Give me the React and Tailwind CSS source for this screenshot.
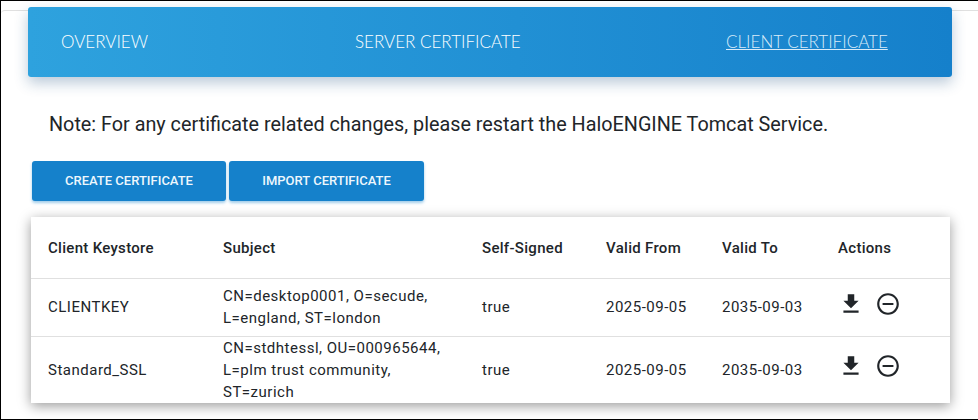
const DownloadIcon = () => (
  <svg width="26" height="26" viewBox="0 0 24 24" fill="currentColor">
    <path d="M19 9h-4V3H9v6H5l7 7 7-7zM5 18v2h14v-2H5z" />
  </svg>
)

const RemoveIcon = () => (
  <svg width="26" height="26" viewBox="0 0 24 24" fill="currentColor">
    <path d="M7 11v2h10v-2H7zm5-9C6.48 2 2 6.48 2 12s4.48 10 10 10 10-4.48 10-10S17.52 2 12 2zm0 18c-4.41 0-8-3.59-8-8s3.59-8 8-8 8 3.59 8 8-3.59 8-8 8z" />
  </svg>
)

const rows = [
  { name: 'CLIENTKEY', subject: 'CN=desktop0001, O=secude, L=england, ST=london', h: 'h-[58px]', icons: 'mt-[-7px]', lines: 'mt-[-2px]' },
  { name: 'Standard_SSL', subject: 'CN=stdhtessl, OU=000965644, L=plm trust community, ST=zurich', h: 'h-[66px]', icons: 'mt-[-8px]', lines: '' },
]

export default function App() {
  return (
    <div className="h-[420px] w-[978px] overflow-hidden border-t border-b border-l border-black bg-white font-['Roboto',sans-serif] text-[#212529]">
      <div className="mt-[9px] rounded-tl-[4px] border-t border-[#e0e0e0]">
        <div className="mt-[-4px] mr-[26px] ml-[27px] flex h-[70px] items-center rounded-[3px] bg-gradient-to-r from-[#2ea2de] to-[#1580cb] pl-[33px] font-['Lato',sans-serif] text-[17px] font-light text-white shadow-[0_6px_14px_rgba(30,80,130,0.3)]">
          <span className="w-[294px]">OVERVIEW</span>
          <span className="w-[371px]">SERVER CERTIFICATE</span>
          <span className="text-[#d8ebf9] underline">CLIENT CERTIFICATE</span>
        </div>
      </div>

      <p className="mt-[35px] ml-[48px] text-[19.8px] leading-[26px]">
        Note: For any certificate related changes, please restart the HaloENGINE Tomcat Service.
      </p>

      <div className="mt-[23px] ml-[31px] flex gap-[3px]">
        <button className="h-[40px] w-[194px] rounded-[3px] bg-[#1581cb] text-[13px] font-medium text-[#eef7fd] shadow-[0_2px_3px_rgba(21,129,203,0.4)]">
          CREATE CERTIFICATE
        </button>
        <button className="h-[40px] w-[195px] rounded-[3px] bg-[#1581cb] text-[13px] font-medium text-[#eef7fd] shadow-[0_2px_3px_rgba(21,129,203,0.4)]">
          IMPORT CERTIFICATE
        </button>
      </div>

      <div className="mt-[16px] ml-[30px] w-[919px] bg-white text-[15px] tracking-[0.5px] shadow-[0_3px_12px_rgba(0,0,0,0.4)]">
        <div className="grid h-[62px] grid-cols-[175px_259px_124px_116px_116px_1fr] items-center border-b border-[#e0e0e0] pt-[2px] pl-[17px] font-medium tracking-[0.3px]">
          <span>Client Keystore</span>
          <span>Subject</span>
          <span>Self-Signed</span>
          <span>Valid From</span>
          <span>Valid To</span>
          <span>Actions</span>
        </div>
        {rows.map((r, i) => (
          <div
            key={r.name}
            className={`grid grid-cols-[175px_259px_124px_116px_116px_1fr] items-center pl-[17px] ${r.h} ${i === 0 ? 'border-b border-[#e0e0e0]' : ''}`}
          >
            <span>{r.name}</span>
            <span className={`w-[225px] leading-[22px] ${r.lines}`}>{r.subject}</span>
            <span>true</span>
            <span>2025-09-05</span>
            <span>2035-09-03</span>
            <span className={`flex items-center gap-[11px] ${r.icons}`}>
              <DownloadIcon />
              <RemoveIcon />
            </span>
          </div>
        ))}
      </div>
    </div>
  )
}
